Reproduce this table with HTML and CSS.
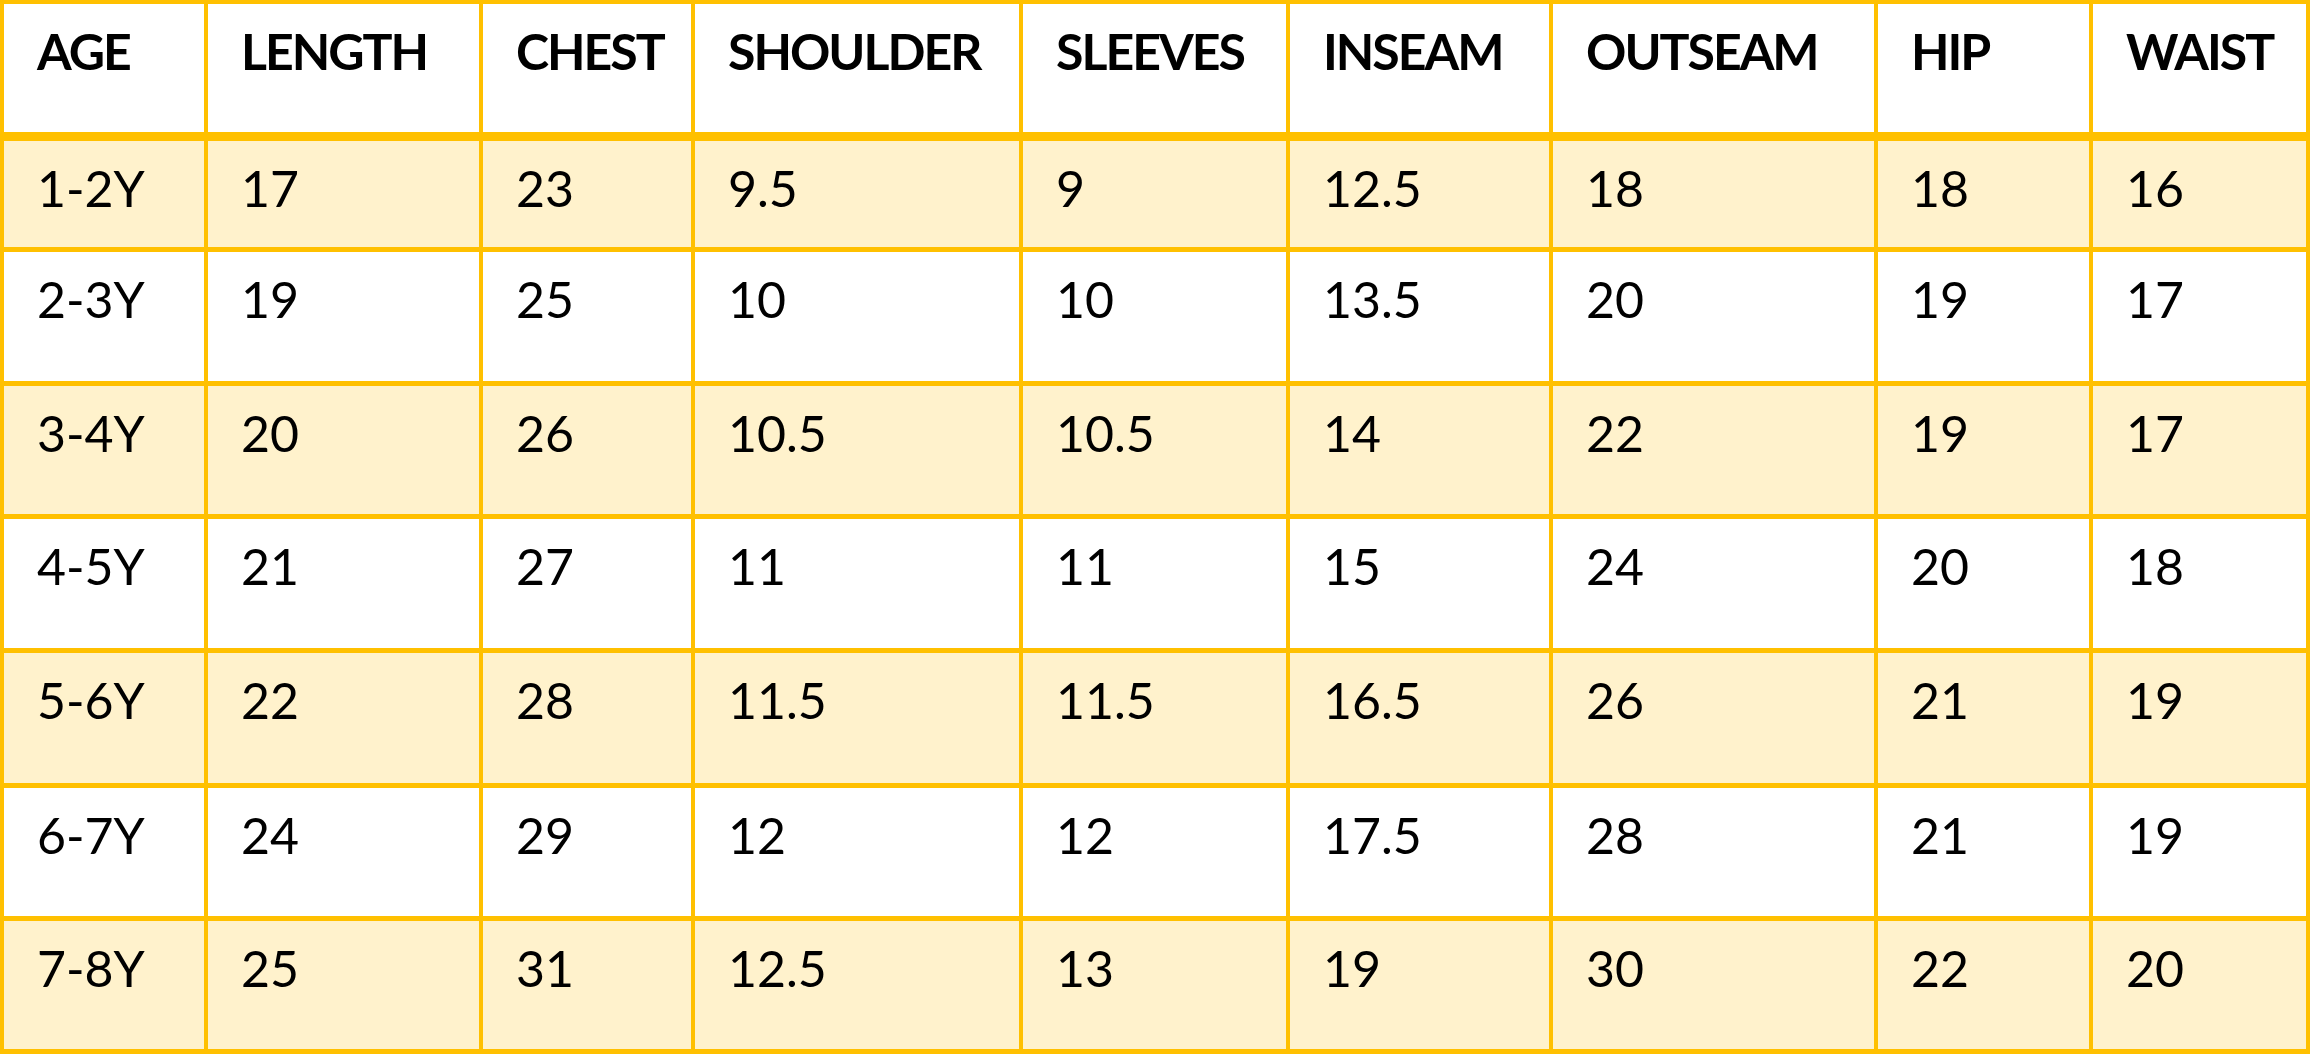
FILE: index.html
```html
<!DOCTYPE html>
<html lang="en">
<head>
<meta charset="utf-8">
<title>Size Chart</title>
<link rel="stylesheet" href="styles.css">
</head>
<body>
<div class="sheet">
  <div class="row head">
    <div class="cell">AGE</div><div class="cell">LENGTH</div><div class="cell">CHEST</div><div class="cell">SHOULDER</div><div class="cell">SLEEVES</div><div class="cell">INSEAM</div><div class="cell">OUTSEAM</div><div class="cell">HIP</div><div class="cell">WAIST</div>
  </div>
  <div class="row alt">
    <div class="cell">1-2Y</div><div class="cell">17</div><div class="cell">23</div><div class="cell">9.5</div><div class="cell">9</div><div class="cell">12.5</div><div class="cell">18</div><div class="cell">18</div><div class="cell">16</div>
  </div>
  <div class="row">
    <div class="cell">2-3Y</div><div class="cell">19</div><div class="cell">25</div><div class="cell">10</div><div class="cell">10</div><div class="cell">13.5</div><div class="cell">20</div><div class="cell">19</div><div class="cell">17</div>
  </div>
  <div class="row alt">
    <div class="cell">3-4Y</div><div class="cell">20</div><div class="cell">26</div><div class="cell">10.5</div><div class="cell">10.5</div><div class="cell">14</div><div class="cell">22</div><div class="cell">19</div><div class="cell">17</div>
  </div>
  <div class="row">
    <div class="cell">4-5Y</div><div class="cell">21</div><div class="cell">27</div><div class="cell">11</div><div class="cell">11</div><div class="cell">15</div><div class="cell">24</div><div class="cell">20</div><div class="cell">18</div>
  </div>
  <div class="row alt">
    <div class="cell">5-6Y</div><div class="cell">22</div><div class="cell">28</div><div class="cell">11.5</div><div class="cell">11.5</div><div class="cell">16.5</div><div class="cell">26</div><div class="cell">21</div><div class="cell">19</div>
  </div>
  <div class="row">
    <div class="cell">6-7Y</div><div class="cell">24</div><div class="cell">29</div><div class="cell">12</div><div class="cell">12</div><div class="cell">17.5</div><div class="cell">28</div><div class="cell">21</div><div class="cell">19</div>
  </div>
  <div class="row alt">
    <div class="cell">7-8Y</div><div class="cell">25</div><div class="cell">31</div><div class="cell">12.5</div><div class="cell">13</div><div class="cell">19</div><div class="cell">30</div><div class="cell">22</div><div class="cell">20</div>
  </div>
</div>
</body>
</html>
```

FILE: styles.css
```css
html, body {
  margin: 0;
  padding: 0;
  background: #ffffff;
}

body {
  font-family: "Lato", "Open Sans", sans-serif;
  color: #000000;
}

.sheet {
  display: grid;
  width: 2306px;
  grid-template-columns: 204px 275px 212px 328px 267px 263px 325px 215px 217px;
  grid-template-rows: 137px 111px 134px 133px 134px 135px 133px 133px;
  border-top: 4px solid #ffc000;
  border-left: 4px solid #ffc000;
}

.row {
  display: contents;
}

.cell {
  box-sizing: border-box;
  border-right: 4px solid #ffc000;
  border-bottom: 5px solid #ffc000;
  padding: 17px 0 0 33px;
  font-size: 50px;
  line-height: 60px;
  white-space: nowrap;
  overflow: hidden;
}

.head .cell {
  font-weight: 700;
  letter-spacing: -2px;
  border-bottom-width: 9px;
}

.alt .cell {
  background: #fff2cc;
}
```
